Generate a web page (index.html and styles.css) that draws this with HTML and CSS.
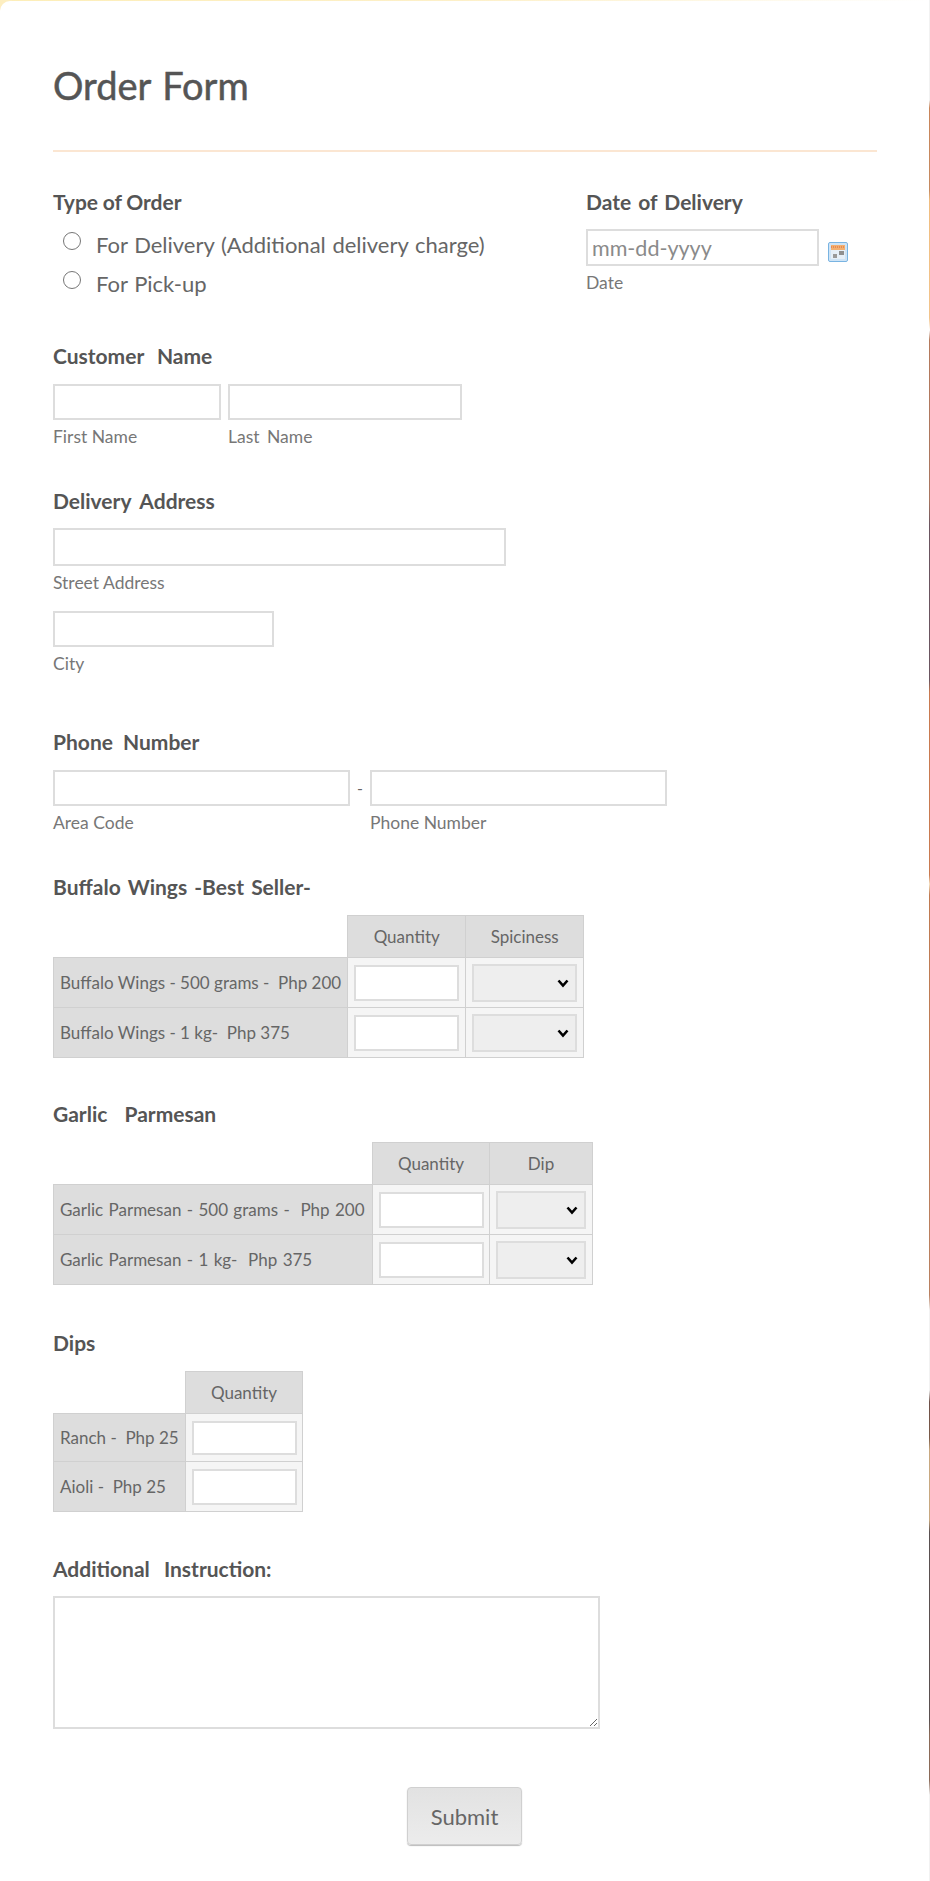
FILE: index.html
```html
<!DOCTYPE html>
<html lang="en">
<head>
<meta charset="utf-8">
<title>Order Form</title>
<link rel="stylesheet" href="styles.css">
</head>
<body>
<svg class="defs" width="0" height="0"><symbol id="chev" viewBox="0 0 12 9"><path d="M1.5 1.5 6 6.5l4.5-5" fill="none" stroke="#000" stroke-width="2.6"/></symbol></svg>
<form class="card">
  <header class="head"><h1 class="title">Order Form</h1></header>

  <div class="top-row">
    <div class="order-type">
      <div class="label">Type of Order</div>
      <label class="option"><input class="radio" type="radio" name="type"><span>For Delivery (Additional delivery charge)</span></label>
      <label class="option"><input class="radio" type="radio" name="type"><span>For Pick-up</span></label>
    </div>
    <div class="date-col">
      <div class="label">Date of Delivery</div>
      <div class="date-line">
        <input class="text w-date" type="text" placeholder="mm-dd-yyyy">
        <svg class="cal" width="20" height="20" viewBox="0 0 20 20">
          <rect x="0.5" y="0.5" width="19" height="19" rx="1.5" fill="#cfe4f6" stroke="#79b4e2"/>
          <rect x="3" y="3" width="14" height="5" fill="#f3b070"/>
          <path d="M3 5h14" stroke="#d8663a" stroke-width="1" stroke-dasharray="1 1"/>
          <rect x="3" y="8" width="14" height="9" fill="#e6eff8"/>
          <rect x="5" y="12" width="4" height="4" fill="#9a9a9a"/>
          <rect x="11" y="9" width="5" height="4" fill="#8f8f8f"/>
        </svg>
      </div>
      <div class="sub">Date</div>
    </div>
  </div>

  <section class="sec s-name">
    <div class="label">Customer Name</div>
    <div class="inline">
      <div><input class="text w-first" type="text"><div class="sub">First Name</div></div>
      <div><input class="text w-last" type="text"><div class="sub sub-wide">Last Name</div></div>
    </div>
  </section>

  <section class="sec s-addr">
    <div class="label">Delivery Address</div>
    <input class="text w-street" type="text"><div class="sub">Street Address</div>
    <input class="text w-city" type="text"><div class="sub">City</div>
  </section>

  <section class="sec s-phone">
    <div class="label">Phone Number</div>
    <div class="inline phone">
      <div><input class="text w-phone" type="text"><div class="sub">Area Code</div></div>
      <span class="dash">-</span>
      <div><input class="text w-phone" type="text"><div class="sub">Phone Number</div></div>
    </div>
  </section>

  <section class="sec s-wings">
    <div class="label">Buffalo Wings -Best Seller-</div>
    <table class="matrix">
      <tr><td class="blank n-wings"></td><th class="q1">Quantity</th><th class="q2">Spiciness</th></tr>
      <tr><th class="rowh">Buffalo Wings - 500 grams - &nbsp;Php 200</th><td><input class="cell-in" type="text"></td><td><div class="sel"><select class="cell-sel"><option></option></select><svg class="chev" width="12" height="9"><use href="#chev"/></svg></div></td></tr>
      <tr><th class="rowh">Buffalo Wings - 1 kg- &nbsp;Php 375</th><td><input class="cell-in" type="text"></td><td><div class="sel"><select class="cell-sel"><option></option></select><svg class="chev" width="12" height="9"><use href="#chev"/></svg></div></td></tr>
    </table>
  </section>

  <section class="sec s-garlic">
    <div class="label">Garlic Parmesan</div>
    <table class="matrix">
      <tr class="tall"><td class="blank n-garlic"></td><th class="q1">Quantity</th><th class="q2">Dip</th></tr>
      <tr><th class="rowh">Garlic Parmesan - 500 grams - &nbsp;Php 200</th><td><input class="cell-in" type="text"></td><td><div class="sel"><select class="cell-sel"><option></option></select><svg class="chev" width="12" height="9"><use href="#chev"/></svg></div></td></tr>
      <tr><th class="rowh">Garlic Parmesan - 1 kg- &nbsp;Php 375</th><td><input class="cell-in" type="text"></td><td><div class="sel"><select class="cell-sel"><option></option></select><svg class="chev" width="12" height="9"><use href="#chev"/></svg></div></td></tr>
    </table>
  </section>

  <section class="sec s-dips">
    <div class="label">Dips</div>
    <table class="matrix">
      <tr><td class="blank n-dips"></td><th class="q1">Quantity</th></tr>
      <tr class="short"><th class="rowh">Ranch - &nbsp;Php 25</th><td><input class="cell-in" type="text"></td></tr>
      <tr><th class="rowh">Aioli - &nbsp;Php 25</th><td><input class="cell-in" type="text"></td></tr>
    </table>
  </section>

  <section class="sec s-notes">
    <div class="label">Additional Instruction:</div>
    <textarea class="notes"></textarea>
  </section>

  <div class="actions"><button class="submit" type="button">Submit</button></div>
</form>
</body>
</html>
```
FILE: styles.css
```css
* { box-sizing: border-box; }
html, body { margin: 0; }
body {
  width: 930px;
  height: 1881px;
  padding: 1px 1px 0 0;
  overflow: hidden;
  font-family: "Lato", "Open Sans", sans-serif;
  color: #666;
  background:
    linear-gradient(#fdeec0, #fdeec0) left top / 12px 12px no-repeat,
    linear-gradient(to bottom,
      #f2f2f2 0, #f2f2f2 100px, #c9855a 108px, #c58a60 190px, #f0bd80 200px, #f2c48c 318px,
      #fff 330px, #b57a5c 340px, #a87560 500px, #6b5560 525px, #6b5560 680px,
      #c97a50 692px, #c97a50 875px, #f5e0c0 884px, #c07a50 895px, #b98060 1295px,
      #f2f2f2 1310px, #f2f2f2 1390px, #6e5048 1402px, #7a5a48 1438px, #c8a880 1450px,
      #c8a880 1520px, #5a5050 1532px, #5a5050 1720px, #8a6a58 1735px, #8a6a58 1780px,
      #f2f2f2 1795px) right top / 1px 100% no-repeat,
    linear-gradient(to right, #fdeeb8, #fdf0c8 50%, #fff 100%) left top / 100% 1px no-repeat,
    #fff;
}
.defs { position: absolute; }
.card {
  height: 1880px;
  padding: 0 52px 0 53px;
  background: #fff;
  border-radius: 10px;
}
.head {
  padding: 62px 0 43px;
  border-bottom: 2px solid #fbe6d2;
}
.title {
  margin: 0;
  font-size: 38px;
  line-height: 44px;
  font-weight: 400;
  color: #555;
  word-spacing: 2px;
  -webkit-text-stroke: 0.5px #555;
}
.label {
  height: 24px;
  margin-bottom: 15px;
  font-size: 21px;
  line-height: 24px;
  font-weight: 700;
  color: #555;
  word-spacing: 2px;
}
.top-row { display: flex; margin-top: 38px; height: 113px; }
.order-type { width: 533px; }
.order-type .label { margin-bottom: 11px; word-spacing: -0.5px; }
.option {
  display: flex;
  height: 39px;
  padding-left: 10px;
  font-size: 22px;
  line-height: 39px;
  color: #666;
  word-spacing: 1px;
}
.radio { width: 18px; height: 18px; margin: 7px 15px 0 0; flex: none; }
.date-line { display: flex; align-items: flex-start; }
.cal { margin: 13px 0 0 9px; }
.text {
  display: block;
  height: 36px;
  padding: 0 4px;
  font: inherit;
  font-size: 21.5px;
  color: #666;
  background: #fff;
  border: 2px solid #ddd;
  border-radius: 0;
  outline: 0;
}
.text::placeholder { color: #8a8a8a; opacity: 1; }
.sub { margin-top: 7px; font-size: 17.5px; line-height: 20px; color: #777; }
.sub-wide { word-spacing: 3px; }
.w-date { width: 233px; height: 37px; }
.w-first { width: 168px; }
.w-last { width: 234px; }
.w-street { width: 453px; height: 38px; }
.w-city { width: 221px; margin-top: 18px; }
.w-phone { width: 297px; }
.inline { display: flex; gap: 7px; }
.phone { gap: 0; }
.dash { width: 20px; line-height: 36px; text-align: center; font-size: 16px; }
.sec { margin-top: 41px; }
.s-name .label { margin-bottom: 16px; word-spacing: 8px; }
.s-addr { margin-top: 42px; }
.s-addr .label { word-spacing: 4px; }
.s-phone { margin-top: 56px; }
.s-phone .label { margin-bottom: 16px; word-spacing: 5px; }
.s-wings { margin-top: 42px; }
.s-wings .label { margin-bottom: 16px; }
.s-garlic { margin-top: 44px; }
.s-garlic .label { margin-bottom: 16px; word-spacing: 12px; }
.s-dips { margin-top: 46px; }
.s-dips .label { margin-bottom: 16px; }
.s-notes { margin-top: 45px; }
.s-notes .label { word-spacing: 9px; }
.matrix { border-collapse: collapse; table-layout: fixed; font-size: 17px; }
.s-garlic .matrix { word-spacing: 1px; }
.matrix th, .matrix td { padding: 0; height: 50px; border: 1px solid #d0d0d0; }
.matrix tr:first-child th, .matrix tr:first-child td { height: 42px; }
.matrix .tall th, .matrix .tall td { height: 46px; }
.matrix .short th, .matrix .short td { height: 48px; }
.matrix th { font-weight: 400; color: #666; background: #ddd; text-align: center; }
.matrix td { background: #f5f5f5; text-align: center; }
.matrix .blank { background: transparent; border: 0; }
.matrix .rowh { padding: 0 6px; text-align: left; white-space: nowrap; }
.n-wings { width: 294px; }
.n-garlic { width: 319px; }
.n-dips { width: 132px; }
.q1 { width: 118px; }
.q2 { width: 118px; }
.s-garlic .q1 { width: 117px; }
.s-garlic .q2 { width: 103px; }
.s-dips .q1 { width: 117px; }
.cell-in {
  display: block;
  width: 105px;
  height: 36px;
  margin: 0 auto;
  background: #fff;
  border: 2px solid #ddd;
  outline: 0;
}
.short .cell-in { height: 34px; }
.sel { position: relative; width: 105px; height: 38px; margin: 0 auto; }
.s-garlic .sel { width: 90px; }
.cell-sel {
  display: block;
  width: 100%;
  height: 100%;
  appearance: none;
  background: #eee;
  border: 2px solid #ddd;
  border-radius: 0;
  color: #000;
}
.chev { position: absolute; right: 8px; top: 15px; pointer-events: none; }
.notes {
  display: block;
  width: 547px;
  height: 133px;
  border: 2px solid #ddd;
  background: #fff;
  outline: 0;
}
.actions { margin-top: 58px; padding-left: 354px; }
.submit {
  width: 115px;
  height: 58px;
  font: inherit;
  font-size: 22px;
  color: #666;
  background: linear-gradient(#e2e2e2, #ececec);
  border: 1px solid #d0d0d0;
  border-radius: 4px;
  box-shadow: 0 1px 1px #bbb;
}
```
